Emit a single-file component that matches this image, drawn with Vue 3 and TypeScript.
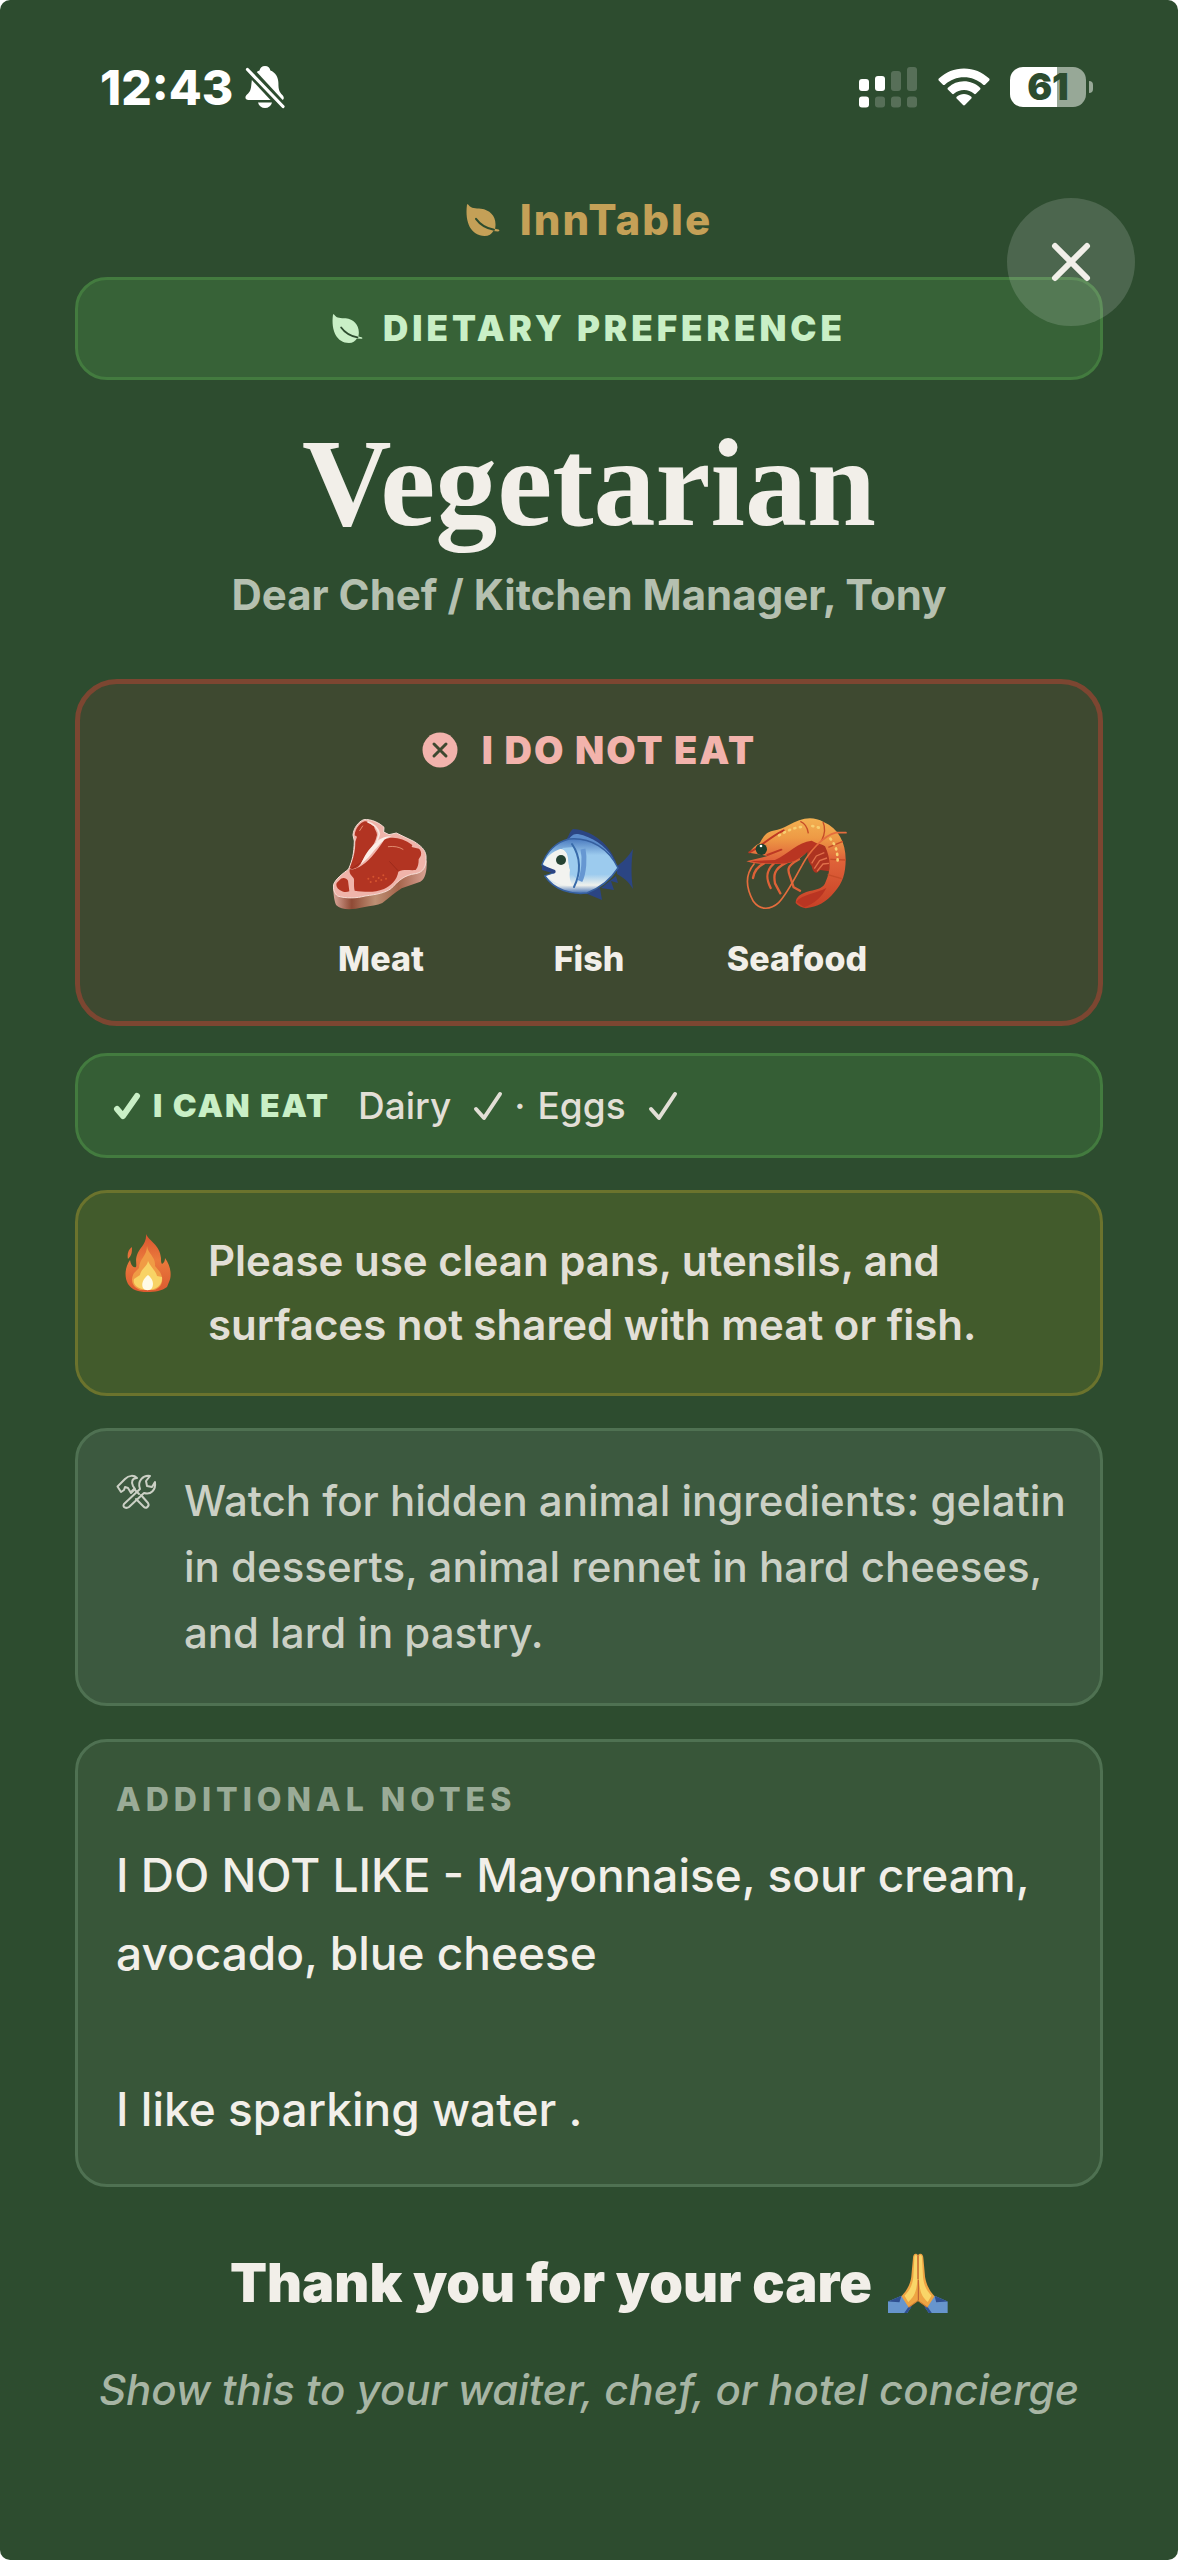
<script setup lang="ts">
import { ref } from 'vue'

interface AvoidedFood {
  id: 'meat' | 'fish' | 'seafood'
  label: string
}

const avoided: AvoidedFood[] = [
  { id: 'meat', label: 'Meat' },
  { id: 'fish', label: 'Fish' },
  { id: 'seafood', label: 'Seafood' },
]

const allowed: string[] = ['Dairy', 'Eggs']

const signalBars: { height: number; on: boolean }[] = [
  { height: 12, on: true },
  { height: 15, on: true },
  { height: 20, on: false },
  { height: 24, on: false },
]

const notes = `I DO NOT LIKE - Mayonnaise, sour cream, avocado, blue cheese

I like sparking water .`

const open = ref(true)
</script>

<template>
  <main v-if="open" class="screen">
    <header class="status">
      <div class="status-side">
        <span class="time">12:43</span>
        <svg class="bell" viewBox="0 0 40 42" aria-label="Silent mode">
          <path fill="#fff" d="M20 0c3 0 5 2 5.400 4.400 5 2 8 6.600 8 12.600 0 7 1 9 4 12 2 2 2 5-1 5H3.500c-3.500 0-4-3.500-1.500-5.500C5.500 25.500 6 23 6.500 17c.4-6.500 3-10.600 8-12.600C15 2 17 0 20 0z" />
          <path fill="#fff" d="M13 36.500h14c-1 3.600-3.600 5.500-7 5.500s-6-1.900-7-5.500z" />
          <path class="bell-gap" d="M1 1 39 42" />
          <path stroke="#fff" stroke-width="3.200" stroke-linecap="round" d="M2.500 3.500 38 40.500" />
        </svg>
      </div>
      <div class="status-side">
        <svg class="signal" viewBox="0 0 59 40" aria-label="Signal">
          <g v-for="(bar, i) in signalBars" :key="i" fill="#fff">
            <rect :x="i * 16" :y="24 - bar.height" width="10" :height="bar.height" rx="3" :opacity="bar.on ? 1 : 0.2" />
            <rect :x="i * 16" y="29.500" width="10" height="11" rx="3" :opacity="i === 0 ? 1 : 0.2" />
          </g>
        </svg>
        <svg class="wifi" viewBox="0 0 52 40" aria-label="Wi-Fi">
          <path fill="#fff" d="M26 1.500c9.600 0 18.300 3.700 24.900 9.800.9.800.9 1.700.1 2.500l-3.700 3.700c-.8.800-1.600.7-2.400 0C39.800 13 33.300 10.300 26 10.300S12.200 13 7.100 17.500c-.8.700-1.600.8-2.400 0L1 13.800c-.8-.8-.8-1.700.1-2.500C7.700 5.200 16.400 1.500 26 1.500z" />
          <path fill="#fff" d="M26 14.300c6.100 0 11.600 2.300 15.800 6.100.9.800.9 1.600.1 2.400l-3.800 3.800c-.7.700-1.500.7-2.300 0A14.500 14.500 0 0 0 26 23c-3.800 0-7.200 1.300-9.800 3.600-.8.700-1.600.7-2.300 0l-3.800-3.800c-.8-.8-.8-1.600.1-2.400A23.300 23.300 0 0 1 26 14.300z" />
          <path fill="#fff" d="M26 27c2.700 0 5.100.9 7 2.500.9.800.9 1.500.1 2.300l-5.900 6c-.8.800-1.600.8-2.400 0l-5.900-6c-.8-.8-.8-1.500.1-2.300 1.900-1.600 4.300-2.500 7-2.500z" />
        </svg>
        <div class="battery">
          <span class="battery-body">61</span>
          <span class="battery-nub"></span>
        </div>
      </div>
    </header>

    <button class="close" type="button" aria-label="Close" @click="open = false">
      <svg viewBox="0 0 40 40"><path d="M4 4 36 36M36 4 4 36" /></svg>
    </button>

    <div class="brand">
      <svg class="leaf" viewBox="0 0 34 32">
        <path fill="currentColor" d="M1 .5C1.400-.2 2.200.2 2.600 1 5.200 4.800 9.500 4.200 15 4.800c8.500 1 14.500 7 14.500 15.400 0 2.100-.2 3.500-.5 4.600l3.500.8c1.600.5 1 2-.6 1.800l-4.500-.5c-1.800 3-4.600 5-8.800 5C5.500 31.900-1.500 19 1 .5z" />
        <path class="leaf-vein" d="M10 14.800c4 5.600 9.200 9.200 18 11" />
      </svg>
      <span>InnTable</span>
    </div>

    <div class="card banner">
      <svg class="leaf" viewBox="0 0 34 32">
        <path fill="currentColor" d="M1 .5C1.400-.2 2.200.2 2.600 1 5.200 4.800 9.500 4.200 15 4.800c8.500 1 14.500 7 14.500 15.400 0 2.100-.2 3.500-.5 4.600l3.500.8c1.600.5 1 2-.6 1.800l-4.500-.5c-1.800 3-4.600 5-8.800 5C5.500 31.900-1.500 19 1 .5z" />
        <path class="leaf-vein" d="M10 14.800c4 5.600 9.200 9.200 18 11" />
      </svg>
      <span>DIETARY PREFERENCE</span>
    </div>

    <h1>Vegetarian</h1>
    <p class="greeting">Dear Chef / Kitchen Manager, Tony</p>

    <section class="avoid">
      <h2 class="avoid-title">
        <svg viewBox="0 0 36 36">
          <circle cx="18" cy="18" r="17.500" fill="currentColor" />
          <path d="M12 12 24 24M24 12 12 24" stroke="#3e4930" stroke-width="3" stroke-linecap="round" />
        </svg>
        <span>I DO NOT EAT</span>
      </h2>
      <ul class="avoid-list">
        <li v-for="food in avoided" :key="food.id">
          <svg v-if="food.id === 'meat'" class="food" viewBox="39 48 288 288">
            <defs>
              <linearGradient id="crust" x1="0" y1="0" x2="1" y2="0">
                <stop offset="0" stop-color="#dba99c" />
                <stop offset=".2" stop-color="#8f4a35" />
                <stop offset=".45" stop-color="#bd9074" />
                <stop offset=".7" stop-color="#a5654c" />
                <stop offset="1" stop-color="#d9a294" />
              </linearGradient>
            </defs>
            <path fill="url(#crust)" d="M39 262c2 24 4 45 10 54 14 14 44 15 81 6 22-5 42-6 57-13 22-16 36-30 58-44l56-20c14-8 20-28 19-62l-30-40L60 240z" />
            <path fill="#f0b4aa" stroke="#f6ddd5" stroke-width="3" d="M131 59c-15 6-30 24-32 46l4 18c-1 38-6 58-17 84-17 14-38 28-45 46-2 14 2 28 12 35 24 8 58 7 82 0 36-5 60-9 79-23 22-24 40-40 72-44 24-4 34-20 32-54-3-20-17-30-35-42l-54-26-22 5-16-8 1-14c-12-12-38-26-61-23z" />
            <path fill="#b23422" d="M134 64c-14 5-28 20-30 42l7 4-5 15c0 34-8 54-17 80 14 6 28-4 36-18 12-26 38-44 46-82 0-10-8-16-9-26-9-5-18-17-28-15z" />
            <path fill="#fbeee7" d="M122 193c10-22 22-45 45-65 12-12 22-18 50-21-28 10-36 25-54 44-12 16-24 30-41 42z" />
            <path fill="none" stroke="#f8e6df" stroke-width="5" stroke-linecap="round" d="M144 66c14 5 30 15 34 36l-8 25" />
            <path fill="#b23422" d="M193 119c24-11 54-5 84 16l-2 6 22 5c8 8 7 17 5 22l-6 10c0 14-2 24-9 32-20 2-34-4-52 5-4 26-24 42-43 52-32 13-61 8-88 5-4-18 0-30-3-37-8-10-14-14-12-27 10 3 19-3 29-7 25-14 49-42 75-82z" />
            <path fill="#b23422" d="M59 240c6-9 20-8 25 2l4 32c-10 4-20 2-29-4-9-6-12-14-9-21z" />
            <path fill="none" stroke="#8f2417" stroke-width="2" d="m208 184 26 28M122 188l-31 21" />
            <path fill="none" stroke="#e08a6d" stroke-width="3" stroke-linecap="round" d="M205 140c16-2 32 0 44 8M128 78l-9 14" />
            <g fill="#d6542f">
              <circle cx="145" cy="236" r="3" /><circle cx="160" cy="230" r="3" /><circle cx="176" cy="234" r="3" />
              <circle cx="190" cy="226" r="3" /><circle cx="152" cy="246" r="3" /><circle cx="168" cy="243" r="3" />
              <circle cx="184" cy="240" r="3" /><circle cx="198" cy="236" r="3" />
            </g>
          </svg>
          <svg v-else-if="food.id === 'fish'" class="food" viewBox="0 0 96 96">
            <defs>
              <linearGradient id="scales" x1="0" y1="0" x2="0" y2="1">
                <stop offset="0" stop-color="#4a7abf" />
                <stop offset=".3" stop-color="#9ccbee" />
                <stop offset=".65" stop-color="#9ccbee" />
                <stop offset=".85" stop-color="#eff1ec" />
                <stop offset="1" stop-color="#3f6db3" />
              </linearGradient>
            </defs>
            <path fill="#2b4583" d="M24 25c3-2 4-9 8-12 16 1 35 12 43 33zM76 50c6-4 11-9 16-17-2 14-2 28 0 40-5-8-9-11-16-15zM44 77l17 7-2-12zM60 72l13 2-3-9 7 2-2-7z" />
            <path fill="#5c8ccb" d="M27 24c4-5 5-6 10-6 14 3 27 11 35 24z" />
            <path fill="url(#scales)" stroke="#355f9f" stroke-width="1.500" d="M1 49c4-13 14-23 27-26 22-2 40 10 49 29-7 11-18 20-31 25-15 2-33-3-42-17l9-3z" />
            <path fill="#f2f3ef" d="M2 48c4-8 9-12 17-15 9-1 8 13 10 21-1 7 0 12 3 16-12 0-22-4-27-10l9-3z" />
            <path fill="#9ccbee" d="M21 32l12-1c4 10 5 24 2 31-6-5-9-15-7-23z" />
            <path fill="none" stroke="#376aa9" stroke-width="2" stroke-linecap="round" d="M31 28c9 13 9 29 2 43" />
            <path fill="none" stroke="#6697d2" stroke-width="5" d="M42 33c2 9 1 24-3 32" />
            <path fill="#2b4583" d="m1 49 13 5c2 3-1 4-3 3L1 54z" />
            <circle cx="20" cy="44" r="5" fill="#244333" />
          </svg>
          <svg v-else class="food" viewBox="150 48 288 288">
            <defs>
              <linearGradient id="shell" x1="0" y1="0" x2="0" y2="1">
                <stop offset="0" stop-color="#f3b152" />
                <stop offset=".22" stop-color="#ee9a45" />
                <stop offset=".45" stop-color="#e0643a" />
                <stop offset="1" stop-color="#c84026" />
              </linearGradient>
            </defs>
            <g fill="none" stroke="#dd6137" stroke-width="7" stroke-linecap="round" stroke-linejoin="round">
              <path d="M195 190c-20 10-30 24-33 44M225 190c-25 22-25 45-10 74M262 188c-40 20-38 40-34 62l16 30M300 178c-40 22-34 34-26 54l10 30 19 10" />
            </g>
            <path fill="#ad3320" d="M326 150c-4 20 2 36 12 48 2 12 8 22 16 20l10-8 26 4 10-60-40-28z" />
            <g fill="none" stroke="#e0704a" stroke-width="4"><path d="m346 206 16-24 22-8M354 214l18-22 18-2M338 190l14-22 24-10" /></g>
            <path fill="url(#shell)" d="M150 158c10-12 18-22 32-28 10-18 18-34 40-38 20-3 32-8 46-16 36-22 72-30 106-10 45 20 66 62 66 112 0 42-9 72-34 99-24 30-50 44-86 48-12-4-22-6-30-16 0-17 13-28 42-36 24-6 42-8 48-28 18-40 14-72-2-106-22-16-42-6-60 22-22 24-50 32-85 31-32-2-60 3-91-8l64-16z" />
            <path fill="#b93522" d="M228 180c42-20 68-54 110-58l36 18c-32-12-46 17-64 28-20 16-44 24-70 23-28-1-54 1-86-8zM292 306c18-24 56-24 90-42-14 28-36 46-66 58z" />
            <path fill="none" stroke="#c64c28" stroke-width="4" d="M304 64c14 6 22 20 24 36M372 66c8 18 7 34-4 56M432 124l-44 18M440 180l-46-2M428 236l-42-12" />
            <path fill="none" stroke="#bd3924" stroke-width="6" stroke-linecap="round" d="M151 157c34-15 56-43 103-66M205 165l42-16" />
            <path fill="none" stroke="#f7ce70" stroke-width="8" stroke-linecap="round" stroke-dasharray="3 14" d="M240 106c26-15 46-24 76-26M340 78l32 8M394 116c18 22 22 40 22 74" />
            <path fill="none" stroke="#e46d3d" stroke-width="5" stroke-linecap="round" d="M165 192c-30 36-22 76-2 112 20 28 52 26 76 4 24-25 50-76 70-112 20-38 64-90 102-98h30" />
            <circle cx="187" cy="148" r="17" fill="#21412d" />
            <circle cx="186" cy="138" r="4" fill="#fff" />
          </svg>
          <span>{{ food.label }}</span>
        </li>
      </ul>
    </section>

    <section class="card can-eat">
      <h2>
        <svg class="tick-bold" viewBox="0 0 26 26"><path d="m3 16 6 7L23 3" /></svg>
        <span>I CAN EAT</span>
      </h2>
      <p>
        <template v-for="(item, i) in allowed" :key="item">
          <span v-if="i > 0" class="dot">·</span>
          <span>{{ item }}</span>
          <svg class="tick" viewBox="0 0 28 28"><path d="m2 17 8 9L26 2" /></svg>
        </template>
      </p>
    </section>

    <section class="card kitchen">
      <svg class="flame" viewBox="-9 -5 64 64">
        <defs>
          <linearGradient id="fire" x1="0" y1="0" x2="0" y2="1">
            <stop offset="0" stop-color="#d9532f" />
            <stop offset=".45" stop-color="#ea7a3c" />
            <stop offset="1" stop-color="#dc5a30" />
          </linearGradient>
        </defs>
        <path fill="url(#fire)" d="M21 0c3 7 14 11 15 24 0 3 0 5 1 6 2-1 3-3 3-6 6 8 7 18 4 24l-2 5C37 57 30 58 22 58c-9 0-15-2-19-8C-1 43 0 33 5 26c1 5 3 8 6 7 1-3-1-6 1-12C14 14 22 10 21 0zM7 13c-4 3-5 7-4 12 4-4 4-7 4-12z" />
        <path fill="#f09b45" d="M22 12c1 8 9 11 8 20l5 6c5 9 1 16-6 18H15C7 53 5 46 9 39l5-5c0-9 8-12 8-22z" />
        <path fill="#f8d365" d="M23 27c2 5 8 10 9 15l5 1c1 8-6 13-14 13S7 52 9 45l6-4c1-6 7-8 8-14z" />
        <path fill="#fffbe7" d="M23 41c5 4 6 9 4 13-2 3-7 3-9 0-2-4 0-9 5-13z" />
      </svg>
      <p>Please use clean pans, utensils, and surfaces not shared with meat or fish.</p>
    </section>

    <section class="card watch">
      <svg class="tools" viewBox="0 -7 40 48">
        <path d="M1.500 11.500 9 4C13 0 18 0 21 3c-5 0-6 4-4 8l2 3-4 4-3-5-3-1-1 3-3 2z" />
        <path d="m15 17 3-3 5 5M20 24l8 8c2 2 6-1 4-4l-7-8" />
        <path d="M8 29 24 14C21 6 27 0 34 1l-4 5 1 5 5 1 3-5c1 8-4 13-11 11L13 32c-3 2-7 0-5-3z" />
      </svg>
      <p>Watch for hidden animal ingredients: gelatin in desserts, animal rennet in hard cheeses, and lard in pastry.</p>
    </section>

    <section class="card notes">
      <h2>ADDITIONAL NOTES</h2>
      <p>{{ notes }}</p>
    </section>

    <footer>
      <p class="thanks">
        <span>Thank you for your care</span>
        <svg class="hands" viewBox="264 101 178 178">
          <path fill="#6795cd" d="m304 228-40 17v34h57l12-18zM402 228l39 17v34h-56l-12-18z" />
          <path fill="#2e4f90" d="m304 228-40 17 34 2zM402 228l39 17-34 2zM321 279l14-20-9 0-14 20zM385 279l-14-20h9l14 20z" />
          <path fill="#eea443" d="M353 108c-7-9-15-4-15 9l-5 55c-3 22-14 42-29 57l21 33 28-20 28 20 21-33c-15-15-24-35-28-57l-5-55c0-13-9-18-16-9z" />
          <path fill="#f9d568" d="M350 110c-5-7-8-2-8 8l-3 56c-3 26-13 40-26 54l11 18c17-14 25-30 27-65zM356 110c5-7 9-2 9 8l3 56c3 26 12 40 25 54l-11 18c-17-14-24-30-26-65z" />
          <path fill="none" stroke="#b75a32" stroke-width="3" d="M353 108v70M354 180v62" />
          <path fill="none" stroke="#d98334" stroke-width="3" d="m325 262 28-20 28 20" />
        </svg>
      </p>
      <p class="hint">Show this to your waiter, chef, or hotel concierge</p>
    </footer>
  </main>
</template>

<style>
html,
body {
  background: #fff;
}
</style>

<style scoped>
.screen {
  --bg: #2d4c2f;
  --cream: #f2efe9;
  --mint: #c9efc6;
  position: relative;
  box-sizing: border-box;
  min-height: 100vh;
  padding: 57px 75px 80px;
  border-radius: 10px;
  background: var(--bg);
  color: var(--cream);
  font-family: Inter, "Liberation Sans", sans-serif;
}

h1,
h2,
p,
ul {
  margin: 0;
  padding: 0;
}

svg {
  display: block;
  flex: none;
  fill: none;
  overflow: visible;
}

.status {
  display: flex;
  justify-content: space-between;
  height: 60px;
  padding: 0 10px 0 25px;
  color: #fff;
}

.status-side {
  display: flex;
  align-items: center;
}

.time {
  font-size: 48px;
  font-weight: 800;
}

.bell {
  width: 40px;
  height: 42px;
  margin-left: 12px;
}

.bell-gap {
  stroke: var(--bg);
  stroke-width: 9;
}

.signal {
  width: 59px;
  height: 40px;
}

.wifi {
  width: 52px;
  height: 40px;
  margin: 0 20px;
}

.battery {
  display: flex;
  align-items: center;
  gap: 3px;
}

.battery-body {
  width: 76px;
  border-radius: 13px;
  background: linear-gradient(90deg, #fff 62%, #97a897 62%);
  color: var(--bg);
  font-size: 37px;
  font-weight: 900;
  line-height: 40px;
  text-align: center;
}

.battery-nub {
  width: 4px;
  height: 12px;
  border-radius: 0 6px 6px 0;
  background: #97a897;
}

.close {
  position: absolute;
  top: 198px;
  right: 43px;
  display: flex;
  align-items: center;
  justify-content: center;
  width: 128px;
  height: 128px;
  padding: 0;
  border: 0;
  border-radius: 50%;
  background: rgba(255, 255, 255, 0.15);
  cursor: pointer;
}

.close svg {
  width: 40px;
  height: 40px;
  stroke: var(--cream);
  stroke-width: 6;
  stroke-linecap: round;
}

.brand {
  display: flex;
  align-items: center;
  justify-content: center;
  gap: 20px;
  margin-top: 73px;
  color: #c4a057;
  font-size: 42px;
  font-weight: 800;
  letter-spacing: 2px;
  line-height: 60px;
}

.leaf {
  width: 34px;
  height: 32px;
}

.leaf-vein {
  stroke: var(--bg);
  stroke-width: 2;
  stroke-linecap: round;
}

.card {
  border: 3px solid #4f7152;
  border-radius: 32px;
}

.banner {
  display: flex;
  align-items: center;
  justify-content: center;
  gap: 20px;
  margin-top: 27px;
  padding: 24px;
  border-color: #437b3f;
  background: #376237;
  color: var(--mint);
  font-size: 35px;
  font-weight: 900;
  letter-spacing: 4px;
  line-height: 49px;
}

.banner .leaf {
  width: 31px;
  height: 29px;
}

h1 {
  margin-top: 44px;
  font-family: "Liberation Serif", serif;
  font-size: 124px;
  font-weight: 700;
  line-height: 120px;
  text-align: center;
}

.greeting {
  margin-top: 21px;
  color: #b5c0b0;
  font-size: 42px;
  font-weight: 700;
  line-height: 60px;
  text-align: center;
}

.avoid {
  margin-top: 54px;
  padding: 41px 36px 40px;
  border: 5px solid #7c4631;
  border-radius: 42px;
  background: #3e4930;
}

.avoid-title {
  display: flex;
  align-items: center;
  justify-content: center;
  gap: 24px;
  color: #f2b3ac;
  font-size: 38px;
  font-weight: 900;
  letter-spacing: 2px;
  line-height: 50px;
}

.avoid-title svg {
  width: 36px;
  height: 36px;
}

.avoid-list {
  display: flex;
  justify-content: center;
  gap: 40px;
  margin-top: 41px;
  list-style: none;
}

.avoid-list li {
  display: flex;
  flex-direction: column;
  align-items: center;
  gap: 25px;
  width: 168px;
  font-size: 34px;
  font-weight: 800;
  line-height: 44px;
}

.food {
  width: 96px;
  height: 96px;
}

.can-eat {
  display: flex;
  align-items: center;
  gap: 28px;
  margin-top: 27px;
  padding: 25px 36px;
  border-color: #437b3f;
  background: #355e35;
  line-height: 49px;
}

.can-eat h2 {
  display: flex;
  align-items: center;
  gap: 13px;
  color: var(--mint);
  font-size: 32px;
  font-weight: 900;
  letter-spacing: 2px;
}

.can-eat p {
  display: flex;
  align-items: center;
  color: #e2dfd6;
  font-size: 37px;
  font-weight: 500;
}

.tick-bold {
  width: 26px;
  height: 26px;
  stroke: currentColor;
  stroke-width: 6;
  stroke-linecap: round;
  stroke-linejoin: round;
}

.tick {
  width: 28px;
  height: 28px;
  margin-left: 23px;
  stroke: currentColor;
  stroke-width: 4;
  stroke-linecap: round;
  stroke-linejoin: round;
}

.dot {
  margin: 0 12px;
}

.kitchen,
.watch {
  display: flex;
  gap: 28px;
  margin-top: 32px;
}

.kitchen {
  padding: 36px 38px;
  border-color: #6b732d;
  background: #425b2c;
  color: #e2dfd6;
  font-size: 42px;
  font-weight: 600;
  line-height: 64px;
}

.flame {
  width: 64px;
  height: 64px;
}

.watch {
  padding: 37px 24px 37px 38px;
  background: #3c593f;
  color: #cbd0c5;
  font-size: 42px;
  font-weight: 500;
  line-height: 66px;
}

.tools {
  width: 40px;
  height: 48px;
  stroke: currentColor;
  stroke-width: 2;
  stroke-linejoin: round;
  stroke-linecap: round;
}

.notes {
  margin-top: 33px;
  padding: 38px 38px 36px;
  background: #385639;
}

.notes h2 {
  color: #9aab97;
  font-size: 32px;
  font-weight: 800;
  letter-spacing: 5px;
  line-height: 40px;
}

.notes p {
  margin-top: 16px;
  font-size: 46px;
  font-weight: 500;
  line-height: 78px;
  white-space: pre-line;
}

footer {
  margin: 61px -60px 0;
  text-align: center;
}

.thanks {
  display: flex;
  align-items: center;
  justify-content: center;
  gap: 16px;
  font-size: 54px;
  font-weight: 900;
  line-height: 70px;
}

.hands {
  width: 60px;
  height: 60px;
}

.hint {
  margin-top: 42px;
  color: #a7b5a4;
  font-size: 42px;
  font-style: italic;
  font-weight: 500;
  line-height: 60px;
}
</style>
